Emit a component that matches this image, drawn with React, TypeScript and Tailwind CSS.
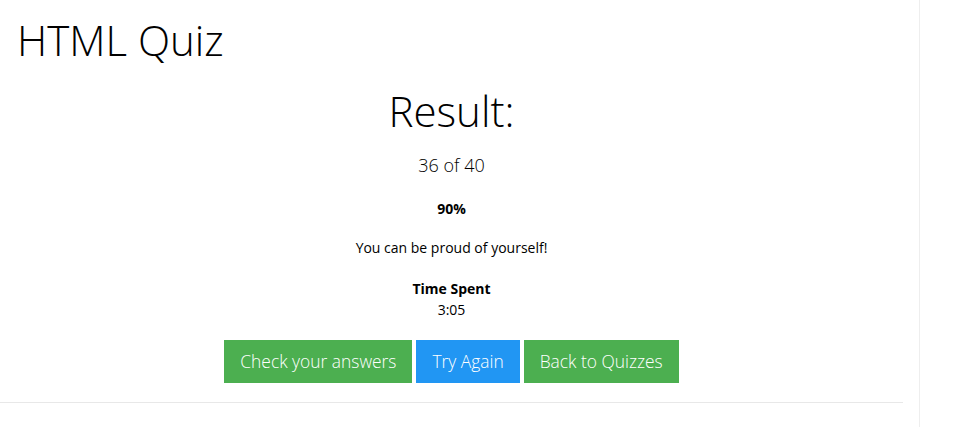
export default function App() {
  const buttons = [
    { label: "Check your answers", color: "bg-[#4caf50]" },
    { label: "Try Again", color: "bg-[#2196f3]" },
    { label: "Back to Quizzes", color: "bg-[#4caf50]" },
  ]

  return (
    <div className="flex min-h-[427px] bg-white text-black font-['Open_Sans',sans-serif]">
      <div className="w-[920px] border-r border-[#eeeeee] pr-[16px]">
        <h1 className="mt-[15px] pl-[17px] text-[42px] leading-[50px] font-light">HTML Quiz</h1>

        <div className="flex flex-col items-center text-center">
          <h2 className="mt-[21px] text-[42px] leading-[50px] font-light">Result:</h2>
          <p className="mt-[17px] text-[18px] leading-[24px] font-light">36 of 40</p>
          <p className="mt-[22px] text-[14px] leading-[20px] font-bold">90%</p>
          <p className="mt-[19px] text-[14px] leading-[20px]">You can be proud of yourself!</p>
          <p className="mt-[21px] text-[14px] leading-[20px] font-bold">Time Spent</p>
          <p className="mt-[1px] text-[14px] leading-[20px]">3:05</p>

          <div className="mt-[20px] flex gap-[4px]">
            {buttons.map((b) => (
              <button
                key={b.label}
                className={`${b.color} h-[43px] px-[16px] text-[17.4px] font-light text-white`}
              >
                {b.label}
              </button>
            ))}
          </div>
        </div>

        <hr className="mt-[19px] border-t border-[#e8e8e8]" />
      </div>
      <div className="flex-1" />
    </div>
  )
}
